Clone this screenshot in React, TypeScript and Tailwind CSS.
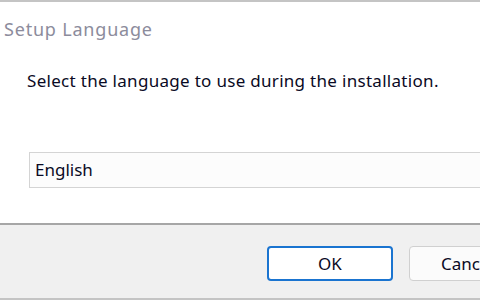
export default function App() {
  return (
    <div className="w-[480px] h-[300px] bg-white overflow-hidden flex flex-col" style={{ fontFamily: '"Noto Sans", "DejaVu Sans", sans-serif' }}>
      <div className="h-[2px] bg-[#c4c4c4] shrink-0" />
      <div className="h-[221px] shrink-0 flex flex-col">
        <div className="pl-[4px] pt-[14px] text-[18px] leading-[26px] tracking-[0.8px] text-[#8c8c9c]">Setup Language</div>
        <div className="pl-[27px] pt-[27px] text-[17px] leading-[24px] tracking-[0.3px] text-[#0a0a24] whitespace-nowrap">
          Select the language to use during the installation.
        </div>
        <div className="pl-[29px] pt-[59px]">
          <div className="w-[470px] h-[36px] border border-[#d4d4d4] bg-[#fcfcfc] flex items-center pl-[5px] text-[17px] text-[#0a0a24]">
            English
          </div>
        </div>
      </div>
      <div className="h-[2px] bg-[#a6a6a6] shrink-0" />
      <div className="flex-1 bg-[#f0f0f0] flex items-start pt-[21px] pl-[267px] gap-[16px]">
        <div className="w-[126px] h-[35px] shrink-0 rounded-[4px] border-2 border-[#1a74d0] bg-white flex items-center justify-center text-[17px] text-[#0a0a24]">
          OK
        </div>
        <div className="w-[126px] h-[35px] shrink-0 rounded-[4px] border border-[#d0d0d0] bg-[#fbfbfb] flex items-center justify-start pl-[31px] text-[17px] text-[#0a0a24]">
          Cancel
        </div>
      </div>
      <div className="h-[2px] bg-[#c4c4c4] shrink-0" />
    </div>
  );
}
